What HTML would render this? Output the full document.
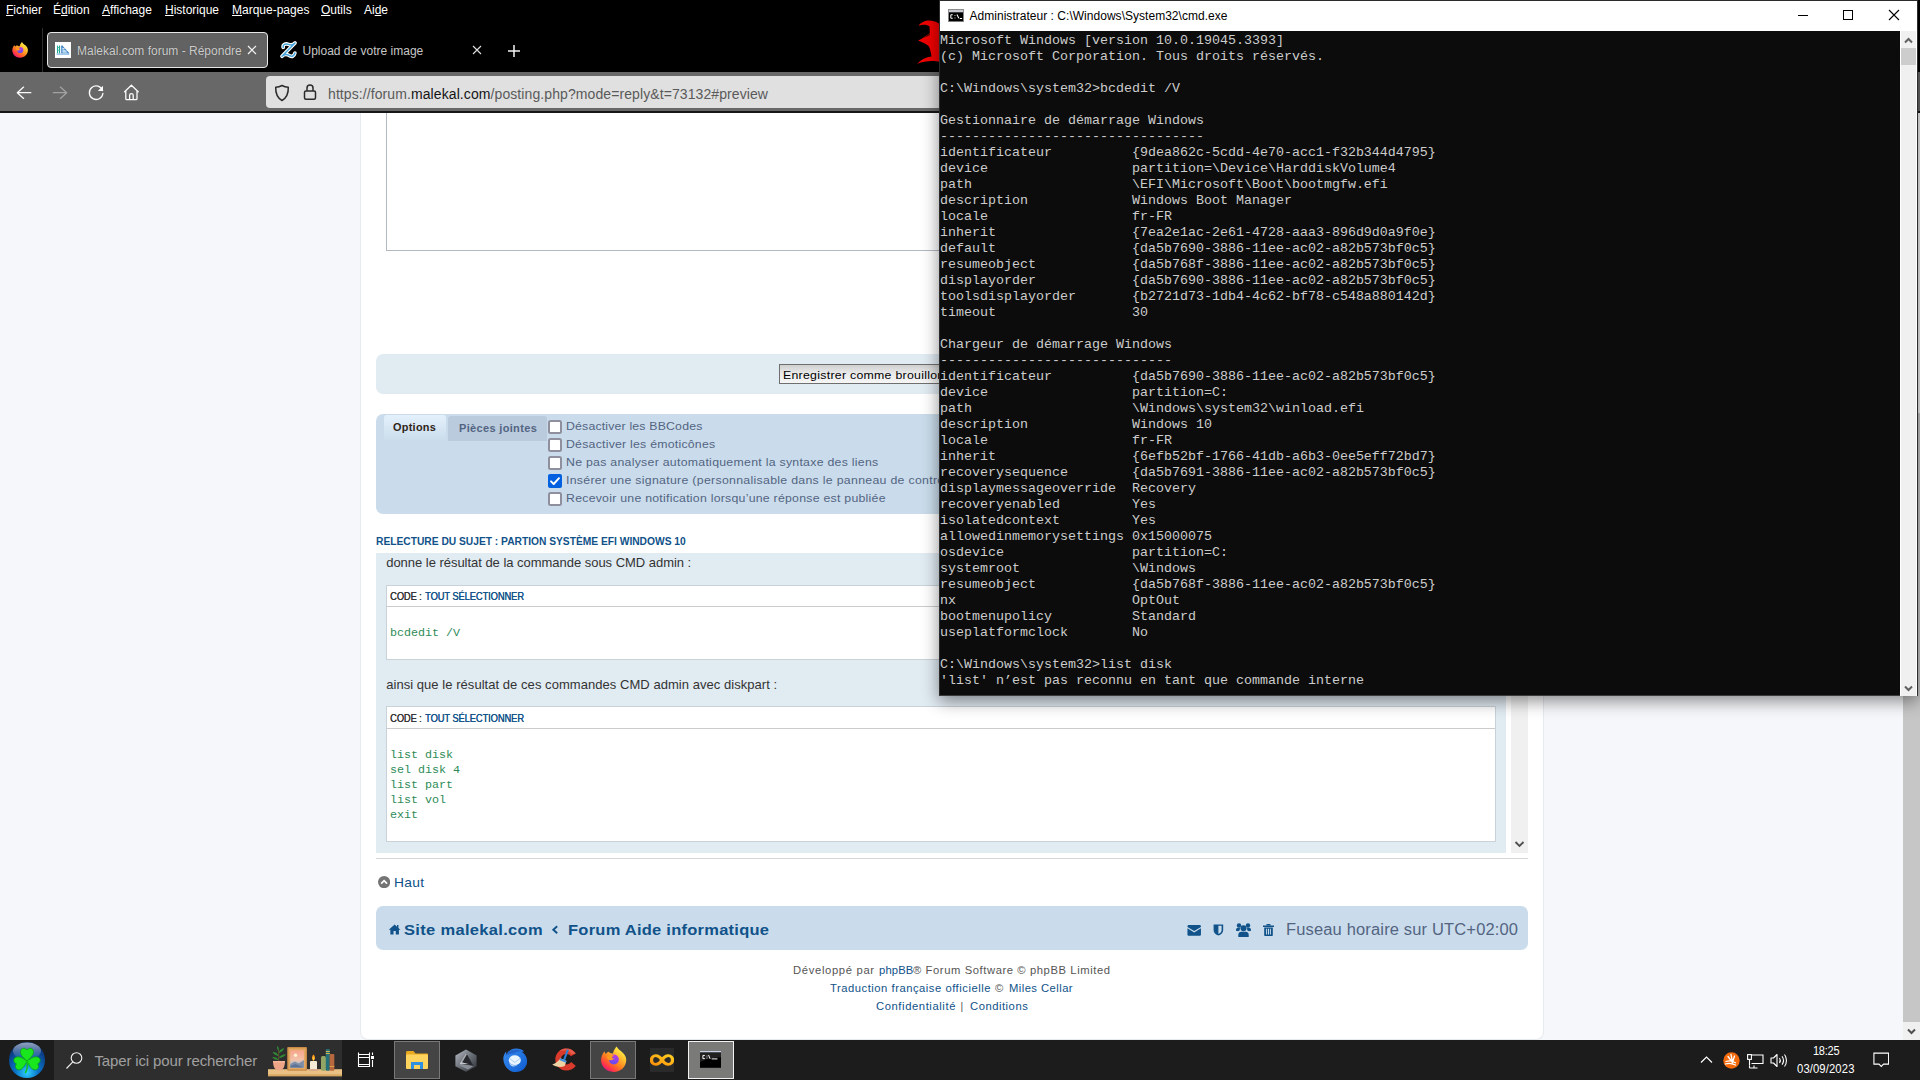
<!DOCTYPE html>
<html><head><meta charset="utf-8"><title>screenshot</title>
<style>
*{box-sizing:border-box;margin:0;padding:0}
html,body{width:1920px;height:1080px;overflow:hidden;background:#f5f7fa;font-family:"Liberation Sans",sans-serif}
.abs{position:absolute}
#root{position:relative;width:1920px;height:1080px;overflow:hidden}
/* firefox chrome */
#menubar{left:0;top:0;width:1920px;height:20px;background:#000;color:#fff;font-size:12px}
#menubar span{position:absolute;top:3px;white-space:nowrap}
#menubar u{text-decoration:underline;text-underline-offset:1px}
#tabbar{left:0;top:20px;width:1920px;height:52px;background:#000}
#navbar{left:0;top:72px;width:1920px;height:41px;background:#686868;border-bottom:2.500px solid #161616}
#urlbar{left:266px;top:75.600px;width:1400px;height:32.200px;background:#e0e0e0;border-radius:4px}
.tabtxt{color:#cdcdcd;font-size:12px;white-space:nowrap}
/* page */
#col{left:360px;top:113px;width:1184px;height:927px;background:#fff;border:1px solid #e6e9ed;border-top:0;border-radius:0 0 8px 8px}
.vd{font-family:"Liberation Sans",sans-serif;white-space:nowrap}
.panel1{background:#e1ebf2;border-radius:7px}
.panel2{background:#cadceb;border-radius:7px}
.cb{width:14px;height:14px;border:2px solid #8f8f9d;border-radius:2.500px;background:#fff}
.lbl{color:#536482;font-size:13.4px;white-space:nowrap;letter-spacing:.35px}
.codebox{background:#fff;border:1px solid #c9d2d8}
.codehd{left:0;top:0;right:0;height:21px;border-bottom:1px solid #ccc;font-size:9.900px;line-height:12px;color:#333;white-space:nowrap}
.code{font-family:"Liberation Mono",monospace;color:#2e8b57;font-size:11.7px;white-space:pre;line-height:15px}
.ptxt{color:#333;font-size:13px;white-space:nowrap}
/* cmd */
#cmd{left:939px;top:0;width:979px;height:696px;background:#0c0c0c;border:1px solid #2b2b2b;border-bottom:1px solid #3a3a3a;box-shadow:0 5px 16px rgba(0,0,0,.45)}
#cmdtitle{left:0;top:0;width:977px;height:30px;background:#fff}
#cmdtext{left:0px;top:32px;font-family:"Liberation Mono",monospace;font-size:13.6px;line-height:16px;color:#ccc;white-space:pre;transform:scaleX(0.98039);transform-origin:0 0}
/* taskbar */
#taskbar{left:0;top:1040px;width:1920px;height:40px;background:#1c1c1c}
</style></head><body><div id="root">

<!-- PAGE BACKGROUND + COLUMN -->
<div class="abs" id="col"></div>
<div class="abs" id="page" style="left:0;top:0;width:1920px;height:1080px">
<!-- textarea -->
<div class="abs" style="left:386px;top:100px;width:1122px;height:151px;border:1px solid #b3b9c0;background:#fff"></div>
<!-- submit panel -->
<div class="abs panel1" style="left:376px;top:354px;width:1152px;height:40px"></div>
<div class="abs" style="left:779px;top:364px;width:200px;height:20px;background:linear-gradient(#cfcfcf,#e9e9e9 45%,#f6f6f6);border:1px solid #6f6f6f;color:#000;font-size:11.500px;line-height:13px;padding:3.800px 0 0 3.300px"><span style="display:inline-block;font-size:11.5px;letter-spacing:0.264px;white-space:pre;transform-origin:0 50%;transform:scaleX(1.07);">Enregistrer comme brouillon</span></div>
<!-- options panel -->
<div class="abs panel2" style="left:376px;top:414px;width:1152px;height:99.500px"></div>
<div class="abs" style="left:384px;top:415px;width:62px;height:26px;border-radius:3px 3px 0 0;background:linear-gradient(#e4f1fc,#cadceb);color:#2e2418;font-size:10.400px;line-height:12px;padding:6.700px 0 0 9.4px"><span style="display:inline-block;font-size:10.4px;letter-spacing:0.257px;white-space:pre;transform-origin:0 50%;transform:scaleX(1.05);font-weight:bold;">Options</span></div>
<div class="abs" style="left:448px;top:416px;width:99px;height:25px;border-radius:3px 3px 0 0;background:#b9cbdc;color:#536482;font-size:10.400px;line-height:12px;padding:7.100px 0 0 10.7px"><span style="display:inline-block;font-size:10.4px;letter-spacing:0.312px;white-space:pre;transform-origin:0 50%;transform:scaleX(1.06);font-weight:bold;">Pièces jointes</span></div>
<div class="abs cb" style="left:548px;top:420px"></div>
<div class="abs cb" style="left:548px;top:438px"></div>
<div class="abs cb" style="left:548px;top:456px"></div>
<div class="abs" style="left:548px;top:474px;width:14px;height:14px;border-radius:2px;background:#0060df"><svg width="14" height="14" viewBox="0 0 14 14" style="display:block"><path d="M3 7.300l2.700 2.700L11 4.200" stroke="#fff" stroke-width="1.900" fill="none" stroke-linecap="round" stroke-linejoin="round"/></svg></div>
<div class="abs cb" style="left:548px;top:492px"></div>
<div class="abs lbl" style="left:566.2px;top:418px"><span style="display:inline-block;font-size:11.5px;letter-spacing:0.162px;white-space:pre;transform-origin:0 50%;transform:scaleX(1.07);">Désactiver les BBCodes</span></div>
<div class="abs lbl" style="left:566.2px;top:436px"><span style="display:inline-block;font-size:11.5px;letter-spacing:0.216px;white-space:pre;transform-origin:0 50%;transform:scaleX(1.07);">Désactiver les émoticônes</span></div>
<div class="abs lbl" style="left:566.2px;top:454px"><span style="display:inline-block;font-size:11.5px;letter-spacing:0.257px;white-space:pre;transform-origin:0 50%;transform:scaleX(1.07);">Ne pas analyser automatiquement la syntaxe des liens</span></div>
<div class="abs lbl" style="left:566.2px;top:472px"><span style="display:inline-block;font-size:11.5px;letter-spacing:0.282px;white-space:pre;transform-origin:0 50%;transform:scaleX(1.07);">Insérer une signature (personnalisable dans le panneau de contrôle)</span></div>
<div class="abs lbl" style="left:566.2px;top:490px"><span style="display:inline-block;font-size:11.5px;letter-spacing:0.233px;white-space:pre;transform-origin:0 50%;transform:scaleX(1.07);">Recevoir une notification lorsqu’une réponse est publiée</span></div>
<!-- heading -->
<div class="abs" style="left:376.2px;top:531px;color:#105289"><span style="display:inline-block;font-size:11.4px;letter-spacing:-0.012px;white-space:pre;transform-origin:0 50%;transform:scaleX(0.9);font-weight:bold;">RELECTURE DU SUJET : PARTION SYSTÈME EFI WINDOWS 10</span></div>
<!-- post review -->
<div class="abs" style="left:376px;top:553px;width:1130px;height:300px;background:#e1ebf2"></div>
<div class="abs ptxt" style="left:386.2px;top:555px"><span style="display:inline-block;font-size:13.0px;letter-spacing:-0.028px;white-space:pre;transform-origin:0 50%;">donne le résultat de la commande sous CMD admin :</span></div>
<div class="abs codebox" style="left:386px;top:585px;width:1110px;height:75px"><div class="abs codehd" style="padding:5px 0 0 3px"><span style="text-shadow:.35px 0 0 currentColor"><span style="display:inline-block;font-size:10.4px;letter-spacing:-0.132px;white-space:pre;transform-origin:0 50%;transform:scaleX(0.9);">CODE :</span></span><span class="abs" style="color:#105289;left:38.200px;text-shadow:.35px 0 0 currentColor"><span style="display:inline-block;font-size:10.4px;letter-spacing:-0.107px;white-space:pre;transform-origin:0 50%;transform:scaleX(0.9);">TOUT SÉLECTIONNER</span></span></div><div class="abs code" style="left:3px;top:40px">bcdedit /V</div></div>
<div class="abs ptxt" style="left:386.2px;top:677px"><span style="display:inline-block;font-size:13.0px;letter-spacing:0.047px;white-space:pre;transform-origin:0 50%;">ainsi que le résultat de ces commandes CMD admin avec diskpart :</span></div>
<div class="abs codebox" style="left:386px;top:706px;width:1110px;height:136px"><div class="abs codehd" style="height:22px;padding:6px 0 0 3px"><span style="text-shadow:.35px 0 0 currentColor"><span style="display:inline-block;font-size:10.4px;letter-spacing:-0.132px;white-space:pre;transform-origin:0 50%;transform:scaleX(0.9);">CODE :</span></span><span class="abs" style="color:#105289;left:38.200px;text-shadow:.35px 0 0 currentColor"><span style="display:inline-block;font-size:10.4px;letter-spacing:-0.107px;white-space:pre;transform-origin:0 50%;transform:scaleX(0.9);">TOUT SÉLECTIONNER</span></span></div><div class="abs code" style="left:3px;top:41px">list disk
sel disk 4
list part
list vol
exit</div></div>
<!-- inner scrollbar -->
<div class="abs" style="left:1511px;top:553px;width:17px;height:300px;background:#f0f0f0"></div>
<svg class="abs" style="left:1514px;top:840px" width="11" height="8" viewBox="0 0 11 8"><path d="M1.500 2l4 4 4-4" stroke="#505050" stroke-width="1.800" fill="none"/></svg>
<div class="abs" style="left:376px;top:858px;width:1152px;height:1px;background:#d6d6d6"></div>
<!-- Haut -->
<svg class="abs" style="left:378px;top:876px" width="12.200" height="12.200" viewBox="0 0 14 14"><circle cx="7" cy="7" r="7" fill="#747474"/><path d="M3.600 8.700L7 5.300l3.400 3.400" stroke="#fff" stroke-width="2" fill="none"/></svg>
<div class="abs" style="left:393.8px;top:872.800px;color:#105289"><span style="display:inline-block;font-size:13.0px;letter-spacing:0.281px;white-space:pre;transform-origin:0 50%;transform:scaleX(1.06);">Haut</span></div>
<!-- footer nav -->
<div class="abs panel2" style="left:376px;top:906px;width:1152px;height:44px"></div>
<svg class="abs" style="left:388px;top:923.200px" width="13.300" height="12.400" viewBox="0 0 14 13"><path d="M7 1.500L0.800 7h1.700v5h3.300V8.500h2.400V12h3.300V7h1.700L11 5.200V2H9.500v1.800z" fill="#105289"/></svg>
<div class="abs" style="left:404.4px;top:921.200px;color:#105289"><span style="display:inline-block;font-size:15.0px;letter-spacing:0.290px;white-space:pre;transform-origin:0 50%;transform:scaleX(1.1);font-weight:bold;">Site malekal.com</span></div>
<svg class="abs" style="left:550px;top:924px" width="10" height="12" viewBox="550 924 10 12"><path d="M557.200 926.300L553.300 929.800L557.200 933.300" stroke="#105289" stroke-width="1.900" fill="none"/></svg>
<div class="abs" style="left:567.8px;top:921.200px;color:#105289"><span style="display:inline-block;font-size:15.0px;letter-spacing:0.226px;white-space:pre;transform-origin:0 50%;transform:scaleX(1.1);font-weight:bold;">Forum Aide informatique</span></div>
<svg class="abs" style="left:1186.500px;top:925px" width="14.400" height="10.800" viewBox="0 0 15 12"><path d="M0 1.500C0 0.700 0.700 0 1.500 0h12c0.800 0 1.500 0.700 1.500 1.500v0.600L7.500 6.800 0 2.100zM0 3.600l7.500 4.700L15 3.600v6.900c0 0.800-0.700 1.500-1.500 1.500h-12C0.700 12 0 11.300 0 10.500z" fill="#105289"/></svg>
<svg class="abs" style="left:1213.100px;top:924px" width="10.800" height="12" viewBox="0 0 13 15"><path d="M0.500 0.500h12v7c0 3.600-2.600 6-6 7-3.400-1-6-3.400-6-7z" fill="#105289"/><path d="M6.500 2.300v10.200c2.400-0.900 4-2.600 4-5V2.300z" fill="#cadceb"/></svg>
<svg class="abs" style="left:1236.200px;top:922.800px" width="15" height="14.100" viewBox="0 0 15 14"><circle cx="3" cy="2.400" r="2.200" fill="#105289"/><circle cx="12" cy="2.400" r="2.200" fill="#105289"/><path d="M0 7.800V6.600c0-1.300 1-2 2-2h2.200c-0.500 0.800-0.600 1.700-0.300 2.600-0.800 0.300-1.300 0.500-1.700 0.900zM15 7.800V6.600c0-1.300-1-2-2-2h-2.200c0.500 0.800 0.600 1.700 0.300 2.600 0.800 0.300 1.300 0.500 1.700 0.900z" fill="#105289"/><circle cx="7.500" cy="5.300" r="3" fill="#105289"/><path d="M2.300 14v-2.200c0-2 1.400-3 2.800-3h4.800c1.400 0 2.800 1 2.800 3V14z" fill="#105289"/></svg>
<svg class="abs" style="left:1263.100px;top:923.800px" width="11" height="12.300" viewBox="0 0 11 12.300"><path d="M3.800 0h3.400l0.600 1.300H3.200zM0 1.600h11v1.400H0zM1.200 3.600h8.600v7.500c0 0.700-0.500 1.200-1.200 1.200H2.400c-0.700 0-1.200-0.500-1.200-1.200zM3.100 4.800v5.800h1V4.800zM5 4.800v5.800h1V4.800zM6.900 4.800v5.800h1V4.800z" fill="#105289" fill-rule="evenodd"/></svg>
<div class="abs" style="left:1285.6px;top:921.300px;color:#536482"><span style="display:inline-block;font-size:16.0px;letter-spacing:0.158px;white-space:pre;transform-origin:0 50%;transform:scaleX(1.03);">Fuseau horaire sur UTC+02:00</span></div>
<!-- copyright -->
<div class="abs" style="left:793px;top:959.700px;color:#555"><span style="display:inline-block;font-size:10.4px;letter-spacing:0.621px;white-space:pre;transform-origin:0 50%;transform:scaleX(1.08);">Développé par </span></div>
<div class="abs" style="left:878.5px;top:959.700px;color:#105289"><span style="display:inline-block;font-size:10.4px;letter-spacing:0.149px;white-space:pre;transform-origin:0 50%;transform:scaleX(1.08);">phpBB</span></div>
<div class="abs" style="left:913px;top:959.700px;color:#555"><span style="display:inline-block;font-size:10.4px;letter-spacing:0.547px;white-space:pre;transform-origin:0 50%;transform:scaleX(1.08);">® Forum Software © phpBB Limited</span></div>
<div class="abs" style="left:830px;top:977.700px;color:#105289"><span style="display:inline-block;font-size:10.4px;letter-spacing:0.487px;white-space:pre;transform-origin:0 50%;transform:scaleX(1.08);">Traduction française officielle</span></div>
<div class="abs" style="left:995px;top:977.700px;color:#555"><span style="display:inline-block;font-size:10.4px;letter-spacing:0.677px;white-space:pre;transform-origin:0 50%;transform:scaleX(1.08);">©</span></div>
<div class="abs" style="left:1009px;top:977.700px;color:#105289"><span style="display:inline-block;font-size:10.4px;letter-spacing:0.416px;white-space:pre;transform-origin:0 50%;transform:scaleX(1.08);">Miles Cellar</span></div>
<div class="abs" style="left:875.6px;top:995.700px;color:#105289"><span style="display:inline-block;font-size:10.4px;letter-spacing:0.548px;white-space:pre;transform-origin:0 50%;transform:scaleX(1.08);">Confidentialité</span></div>
<div class="abs" style="left:960.5px;top:995.700px;color:#555"><span style="font-size:10.4px">&#124;</span></div>
<div class="abs" style="left:969.5px;top:995.700px;color:#105289"><span style="display:inline-block;font-size:10.4px;letter-spacing:0.488px;white-space:pre;transform-origin:0 50%;transform:scaleX(1.08);">Conditions</span></div>
</div>

<!-- FIREFOX CHROME -->
<div class="abs" id="menubar"><span style="left:6px"><u>F</u>ichier</span><span style="left:53px">É<u>d</u>ition</span><span style="left:102px"><u>A</u>ffichage</span><span style="left:165px"><u>H</u>istorique</span><span style="left:232px"><u>M</u>arque-pages</span><span style="left:321px"><u>O</u>utils</span><span style="left:364px">Ai<u>d</u>e</span></div>
<div class="abs" id="tabbar"></div>
<div class="abs" id="navbar"></div>
<div class="abs" id="urlbar"></div>
<div class="abs" id="chrome" style="left:0;top:0;width:1920px;height:113px">
<!-- firefox logo -->
<svg class="abs" style="left:11px;top:41px" width="18" height="18" viewBox="11 41 18 18"><defs><linearGradient id="ffg" x1=".85" y1=".1" x2=".2" y2=".95"><stop offset="0" stop-color="#fff44f"/><stop offset=".3" stop-color="#ffbd2e"/><stop offset=".6" stop-color="#ff7a1f"/><stop offset=".85" stop-color="#ff3647"/><stop offset="1" stop-color="#e31587"/></linearGradient><linearGradient id="ffp" x1=".6" y1="0" x2=".4" y2="1"><stop offset="0" stop-color="#c03be0"/><stop offset="1" stop-color="#5b4cf5"/></linearGradient></defs><path d="M21.900 42C22.800 43.600 24.200 44.400 25.600 45.600C27.400 47.200 28 49 27.900 50.600C27.700 54.600 24.400 57.700 20.100 57.700C15.800 57.700 12.300 54.600 12.300 50.500C12.300 48.400 13.100 46.400 14.400 44.900C14.500 45.600 14.800 46.200 15.200 46.600C15.700 45.800 16.400 45.300 17.100 45.200C17.600 46 18.600 46.400 19.700 46.200C19.900 44.600 20.900 43.200 21.900 42Z" fill="url(#ffg)"/><circle cx="20.200" cy="50" r="3.100" fill="url(#ffp)"/><path d="M16 48.200C17.300 47 19 46.900 20.600 47.500C19.500 47.900 18.900 48.500 19 49.200C19.600 49.200 20.300 49.300 20.700 49.600C19.600 50.400 18.100 50.700 17.200 50.300C16.300 49.900 15.800 49.100 16 48.200Z" fill="#ff9a1f"/></svg>
<div class="abs" style="left:42px;top:28px;width:1px;height:44px;background:#2e2e2e"></div>
<!-- active tab -->
<div class="abs" style="left:47px;top:32px;width:221px;height:36px;background:#626262;border:1px solid #e8e8e8;border-radius:4px"></div>
<div class="abs" style="left:55px;top:42px;width:16px;height:16px;background:#fff"></div>
<svg class="abs" style="left:55px;top:42px" width="16" height="16" viewBox="55 42 16 16"><rect x="57" y="45.600" width="1.100" height="7.800" fill="#1aa890"/><rect x="59" y="45.600" width="1.100" height="7.800" fill="#1aa890"/><rect x="57" y="47.200" width="3.100" height=".8" fill="#35b3a0"/><rect x="57" y="49.800" width="3.100" height=".8" fill="#35b3a0"/><path d="M61.800 45.800L68.800 53.400H61.800Z" fill="#9cc6ea"/><path d="M61.800 45.800L68.800 53.400" stroke="#3b7fc4" stroke-width="1.200"/><rect x="61.300" y="45.600" width="1.100" height="7.800" fill="#2f78c0"/><path d="M62.400 48.500h2.200M62.400 51h4.400" stroke="#fff" stroke-width=".7"/><rect x="56.500" y="53.500" width="12.800" height="1.200" fill="#7fb4e2"/></svg>
<div class="abs tabtxt" style="left:77px;top:44px;text-shadow:0 0 1px rgba(0,0,0,.4)">Malekal.com forum - Répondre</div>
<svg class="abs" style="left:247px;top:44.500px" width="10" height="10" viewBox="0 0 10 10"><path d="M1 1l8 8M9 1L1 9" stroke="#f4f4f4" stroke-width="1.200"/></svg>
<!-- second tab -->
<svg class="abs" style="left:278px;top:39px" width="22" height="22" viewBox="278 39 22 22"><path d="M283.200 47.300C282.600 44.600 285.500 43.200 288.500 44.400C291 45.400 293.500 44.700 295 43L282 56.200C284.500 53.600 287.500 54.400 289.600 55.700C291.800 57 294.300 56 294.900 53" stroke="#fff" stroke-width="3.700" fill="none" stroke-linecap="round" stroke-linejoin="round"/><path d="M283.200 47.300C282.600 44.600 285.500 43.200 288.500 44.400C291 45.400 293.500 44.700 295 43L282 56.200C284.500 53.600 287.500 54.400 289.600 55.700C291.800 57 294.300 56 294.900 53" stroke="#49a6dc" stroke-width="1.500" fill="none" stroke-linecap="round" stroke-linejoin="round"/></svg>
<div class="abs tabtxt" style="left:302.500px;top:44px;color:#c6c6c6">Upload de votre image</div>
<svg class="abs" style="left:472px;top:44.500px" width="10" height="10" viewBox="0 0 10 10"><path d="M1 1l8 8M9 1L1 9" stroke="#e0e0e0" stroke-width="1.100"/></svg>
<svg class="abs" style="left:507px;top:44px" width="14" height="14" viewBox="0 0 14 14"><path d="M7 1v12M1 7h12" stroke="#f4f4f4" stroke-width="1.5"/></svg>
<!-- red deco -->
<svg class="abs" style="left:910px;top:15px" width="30" height="55" viewBox="910 15 30 55"><path d="M918.500 25.800C921 22.300 926 20.200 930 20.600C934 21 938 22.500 940 24.500L940 62C934 60.500 925 60.500 917 64C921 59.500 926 57 931.500 56.500C931 52 930 49 929 46.500C926 44 922 42 918.100 40.600L929.800 35L929.600 26.500C927 24.300 922.500 24 918.500 25.800Z" fill="#f00000"/><path d="M921.800 38.900L939.600 27" stroke="#f00000" stroke-width=".6"/></svg>
<!-- nav icons -->
<svg class="abs" style="left:8px;top:76px" width="140" height="34" viewBox="8 76 140 34"><g fill="none" stroke-linecap="round" stroke-linejoin="round" stroke-width="1.300"><path d="M23.600 87.100L17.300 92.700L23.600 98.400M17.500 92.700H30.800" stroke="#fbfbfb"/><path d="M60.400 87.100L66.700 92.700L60.400 98.400M66.500 92.700H53.300" stroke="#a2a2a2"/><path d="M102.600 90.500A6.800 6.800 0 1 0 102.900 93.500" stroke="#fbfbfb"/><path d="M131.400 85.300L124.600 91.700M131.400 85.300L138.200 91.700M125.800 91.300V98.700Q125.800 99.600 126.700 99.600H136.100Q137 99.600 137 98.700V91.300M129.600 99.400V95.200Q129.600 93.600 131.400 93.600Q133.200 93.600 133.200 95.200V99.400" stroke="#fbfbfb"/></g><path d="M103 85.700V91.100H97.800Z" fill="#fbfbfb"/></svg>
<!-- url icons -->
<svg class="abs" style="left:274px;top:83.500px" width="16" height="18" viewBox="0 0 16 18"><path d="M8 1.500c2 1.200 4 1.700 6.300 1.800 0.200 6-1.800 10.700-6.300 13.200C3.500 14 1.500 9.300 1.700 3.300 4 3.200 6 2.700 8 1.500z" stroke="#2b2b2b" stroke-width="1.500" fill="none" stroke-linejoin="round"/></svg>
<svg class="abs" style="left:303px;top:83px" width="14" height="18" viewBox="0 0 14 18"><rect x="1.500" y="8" width="11" height="8.300" rx="1.500" stroke="#2b2b2b" stroke-width="1.500" fill="none"/><path d="M4 8V5a3 3 0 0 1 6 0V8" stroke="#2b2b2b" stroke-width="1.500" fill="none"/></svg>
<div class="abs" style="left:328px;top:85.500px;font-size:14px;letter-spacing:.09px;color:#5a5a5a;white-space:nowrap">https://forum.<span style="color:#151515">malekal.com</span>/posting.php?mode=reply&amp;t=73132#preview</div>
</div>

<!-- page scrollbar -->
<div class="abs" id="pgscroll" style="left:1903px;top:113px;width:17px;height:927px;background:#f0f0f0"><div class="abs" style="left:0;top:300px;width:17px;height:609px;background:#c6c6c6"></div><svg class="abs" style="left:4px;top:914.500px" width="9" height="7" viewBox="0 0 9 7"><path d="M1 1.500l3.500 3.500 3.500-3.500" stroke="#505050" stroke-width="2" fill="none"/></svg></div>

<!-- CMD WINDOW -->
<div class="abs" id="cmd">
<div class="abs" id="cmdtitle"></div>
<svg class="abs" style="left:8px;top:8px" width="16" height="13.200" viewBox="0 0 17 14"><rect x="0.500" y="0.500" width="16" height="13" fill="#000" stroke="#8a8a8a"/><rect x="1" y="1" width="15" height="2.500" fill="#c8ccd2"/><path d="M3 6.200h2M3 6.200v3.600M3 9.800h2M7 7h0.800M7 9.500h0.800M9.500 5.800l2 4M12.500 10.200h2.500" stroke="#fff" stroke-width="1.100" fill="none"/></svg>
<div class="abs" style="left:29.500px;top:5px;color:#000"><span style="display:inline-block;font-size:12.0px;letter-spacing:0.028px;white-space:pre;transform-origin:0 50%;">Administrateur : C:\Windows\System32\cmd.exe</span></div>
<svg class="abs" style="left:857px;top:8px" width="12" height="12" viewBox="0 0 12 12"><path d="M1 6.500h10" stroke="#000" stroke-width="1"/></svg>
<svg class="abs" style="left:902px;top:8px" width="12" height="12" viewBox="0 0 12 12"><rect x="1.500" y="1.500" width="9" height="9" stroke="#000" stroke-width="1" fill="none"/></svg>
<svg class="abs" style="left:948px;top:8px" width="12" height="12" viewBox="0 0 12 12"><path d="M1 1l10 10M11 1L1 11" stroke="#000" stroke-width="1.100"/></svg>
<div class="abs" id="cmdtext">Microsoft Windows [version 10.0.19045.3393]
(c) Microsoft Corporation. Tous droits réservés.

C:\Windows\system32&gt;bcdedit /V

Gestionnaire de démarrage Windows
---------------------------------
identificateur          {9dea862c-5cdd-4e70-acc1-f32b344d4795}
device                  partition=\Device\HarddiskVolume4
path                    \EFI\Microsoft\Boot\bootmgfw.efi
description             Windows Boot Manager
locale                  fr-FR
inherit                 {7ea2e1ac-2e61-4728-aaa3-896d9d0a9f0e}
default                 {da5b7690-3886-11ee-ac02-a82b573bf0c5}
resumeobject            {da5b768f-3886-11ee-ac02-a82b573bf0c5}
displayorder            {da5b7690-3886-11ee-ac02-a82b573bf0c5}
toolsdisplayorder       {b2721d73-1db4-4c62-bf78-c548a880142d}
timeout                 30

Chargeur de démarrage Windows
-----------------------------
identificateur          {da5b7690-3886-11ee-ac02-a82b573bf0c5}
device                  partition=C:
path                    \Windows\system32\winload.efi
description             Windows 10
locale                  fr-FR
inherit                 {6efb52bf-1766-41db-a6b3-0ee5eff72bd7}
recoverysequence        {da5b7691-3886-11ee-ac02-a82b573bf0c5}
displaymessageoverride  Recovery
recoveryenabled         Yes
isolatedcontext         Yes
allowedinmemorysettings 0x15000075
osdevice                partition=C:
systemroot              \Windows
resumeobject            {da5b768f-3886-11ee-ac02-a82b573bf0c5}
nx                      OptOut
bootmenupolicy          Standard
useplatformclock        No

C:\Windows\system32&gt;list disk
'list' n’est pas reconnu en tant que commande interne</div>
<div class="abs" style="left:960px;top:30px;width:17px;height:665px;background:#fff"></div>
<div class="abs" style="left:961px;top:30px;width:15px;height:665px;background:#f0f0f0"></div>
<div class="abs" style="left:961px;top:47px;width:15px;height:17px;background:#cdcdcd"></div>
<svg class="abs" style="left:963.500px;top:35.500px" width="9" height="7" viewBox="0 0 9 7"><path d="M1 5.500l3.500-3.500 3.500 3.500" stroke="#606060" stroke-width="2" fill="none"/></svg>
<svg class="abs" style="left:963.500px;top:684px" width="9" height="7" viewBox="0 0 9 7"><path d="M1 1.500l3.500 3.500 3.500-3.500" stroke="#606060" stroke-width="2" fill="none"/></svg>
</div>

<!-- TASKBAR -->
<div class="abs" id="taskbar">
<!-- start orb -->
<svg class="abs" style="left:8px;top:1px" width="38" height="38" viewBox="0 0 38 38"><defs><radialGradient id="orb" cx="0.5" cy="0.85" r="0.9"><stop offset="0" stop-color="#2fd0ff"/><stop offset="0.35" stop-color="#0a74c8"/><stop offset="0.75" stop-color="#0a3d86"/><stop offset="1" stop-color="#0b2a5e"/></radialGradient><linearGradient id="orbhi" x1="0" y1="0" x2="0" y2="1"><stop offset="0" stop-color="#fff" stop-opacity=".55"/><stop offset="1" stop-color="#fff" stop-opacity="0"/></linearGradient></defs><circle cx="19" cy="19" r="18" fill="url(#orb)"/><ellipse cx="19" cy="10" rx="14" ry="8.500" fill="url(#orbhi)"/><g fill="#19e61c" stroke="#0b9c12" stroke-width=".7"><path d="M19 20C14.500 16.500 11.800 13 12.600 9.800C13.300 7 16.800 6.300 19 9C21.200 6.300 24.700 7 25.400 9.800C26.200 13 23.500 16.500 19 20Z"/><g transform="rotate(-105 19 20)"><path d="M19 20C14.500 16.500 11.800 13 12.600 9.800C13.300 7 16.800 6.300 19 9C21.200 6.300 24.700 7 25.400 9.800C26.200 13 23.500 16.500 19 20Z"/></g><g transform="rotate(105 19 20)"><path d="M19 20C14.500 16.500 11.800 13 12.600 9.800C13.300 7 16.800 6.300 19 9C21.200 6.300 24.700 7 25.400 9.800C26.200 13 23.500 16.500 19 20Z"/></g></g><path d="M19 20C19.800 24 19.300 28 17.600 31.500" stroke="#12c417" stroke-width="1.600" fill="none" stroke-linecap="round"/></svg>
<!-- search -->
<div class="abs" style="left:54px;top:0;width:288px;height:40px;background:#2e2e2e"></div>
<svg class="abs" style="left:65px;top:11px" width="19" height="19" viewBox="0 0 19 19"><circle cx="11.500" cy="7" r="5.300" stroke="#f0f0f0" stroke-width="1.100" fill="none"/><path d="M7.800 10.800L1.500 17.500" stroke="#f0f0f0" stroke-width="1.100"/></svg>
<div class="abs" style="left:94.400px;top:12px;color:#a0a0a0"><span style="display:inline-block;font-size:15.0px;letter-spacing:-0.132px;white-space:pre;transform-origin:0 50%;">Taper ici pour rechercher</span></div>
<!-- shelf picture -->
<svg class="abs" style="left:267px;top:4px" width="76" height="34" viewBox="267 1044 76 34"><defs><linearGradient id="sky" x1="0" y1="0" x2="0" y2="1"><stop offset="0" stop-color="#f7a58f"/><stop offset=".55" stop-color="#f3c0a8"/><stop offset="1" stop-color="#7fc4e8"/></linearGradient></defs>
<rect x="268" y="1069.200" width="74" height="7" fill="#e9c184"/><rect x="268" y="1074.300" width="74" height="1.900" fill="#d8a863"/>
<path d="M273 1061h12c0 5-1.500 9.500-6 9.500s-6-4.500-6-9.500z" fill="#eea587"/><path d="M273 1061h12v1.300h-12z" fill="#f5b89c"/>
<path d="M278.700 1061v-11" stroke="#6b4a2a" stroke-width="1"/>
<path d="M278.700 1056c-3-0.500-5.500-2-6-4 3 0 5 1.500 6 4zM278.700 1053c2.500-0.800 5-2.500 5.500-5-3 0.500-5 2.500-5.500 5zM278.700 1060c-3 0-5.500-1-6.500-3 3-0.300 5.200 1 6.500 3zM278.700 1058c3-0.300 6-1.500 7.300-3.800-3.300 0-6 1.300-7.300 3.800zM278.700 1051c-1.500-1.300-2-3-1.500-5 1.500 1.200 2 3 1.500 5z" fill="#2f8a35"/>
<rect x="287.200" y="1047" width="19.800" height="23.700" rx="1" fill="#c98a48"/><rect x="288.500" y="1048.300" width="17.200" height="21.100" fill="#e3a862"/><rect x="290.300" y="1050.300" width="13.600" height="17.200" fill="url(#sky)"/>
<path d="M290.300 1064l4.500-2.500 4 2 5.100-3.500v7.500h-13.600z" fill="#7f8ea8"/><path d="M290.300 1066l5-2 8.600 3.500h-13.600z" fill="#5f7396"/><circle cx="295.500" cy="1055.300" r="1.700" fill="#fff3d0"/>
<rect x="310" y="1061" width="7" height="8.800" rx="1" fill="#f6ecd6"/><ellipse cx="313.500" cy="1070" rx="5" ry="1" fill="#d9a98a"/><path d="M313.500 1054.500c1.800 2 2.300 4 0 6.500-2.300-2.500-1.800-4.500 0-6.500z" fill="#ff9a1e"/><path d="M313.500 1057c0.800 1 1 2.200 0 3.500-1-1.300-0.800-2.500 0-3.500z" fill="#ffd84a"/>
<rect x="321" y="1056" width="5" height="14.700" rx="1.500" fill="#93a565"/><rect x="325.800" y="1049" width="4" height="21.700" rx="1" fill="#256f78"/><rect x="325.800" y="1051" width="4" height="1" fill="#d9b44a"/><rect x="325.800" y="1053" width="4" height="1" fill="#d9b44a"/><rect x="329.600" y="1054" width="4.700" height="16.700" rx="1" fill="#b8683e"/><rect x="329.600" y="1066" width="4.700" height="1" fill="#d9a24a"/>
</svg>
<!-- task view -->
<svg class="abs" style="left:356px;top:10px" width="20" height="20" viewBox="356 1050 20 20"><path d="M358.500 1052.500v4.500M369.500 1052.500v4.500M358.500 1054.500h11M358.500 1057.500h11v7h-11zM358.500 1064.500v2.500M369.500 1064.500v2.500M358.500 1066.500h11M372.500 1052.500v14.500" stroke="#fff" stroke-width="1.100" fill="none"/><rect x="371" y="1056" width="3" height="3" fill="#fff"/><path d="M370.500 1055.500h4M370.500 1059.500h4" stroke="#1c1c1c" stroke-width="1"/></svg>
<!-- explorer tile -->
<div class="abs" style="left:394px;top:1px;width:46px;height:38px;background:#444;border:1px solid #787878"></div>
<svg class="abs" style="left:405px;top:9px" width="24" height="22" viewBox="0 0 24 22"><path d="M1 3.500C1 2.700 1.700 2 2.500 2h6l2 2.500H22c.6 0 1 .4 1 1V7H1z" fill="#e8a920"/><rect x="1" y="5.500" width="22" height="14.500" rx="1" fill="#ffd45e"/><path d="M6 13h12v7H6z" fill="#2f8fe0"/><path d="M9 16h6v4H9z" fill="#ffd45e"/></svg>
<!-- hex icon -->
<svg class="abs" style="left:453px;top:7px" width="26" height="26" viewBox="453 1047 26 26"><defs><linearGradient id="hx" x1="0" y1="0" x2="1" y2="1"><stop offset="0" stop-color="#b9bec6"/><stop offset=".5" stop-color="#6a6f77"/><stop offset="1" stop-color="#2c2e33"/></linearGradient></defs><path d="M466 1049.600l10.600 5.800v10.800l-10.600 5.600-10.600-5.600v-10.800z" fill="url(#hx)"/><path d="M466 1052.500l7.500 13.500-14-2.300z" fill="#26282d"/><path d="M466 1052.500l-6.500 11.200 1.800 0.300 5.500-9.500z" fill="#d5d9df" fill-opacity=".75"/><path d="M459.500 1063.700l14 2.300-5.500 3.500-8.500-4z" fill="#8a8f97"/><path d="M459.500 1063.700l10 0.500-8-2z" fill="#cfd3d9"/></svg>
<!-- thunderbird -->
<svg class="abs" style="left:502px;top:7px" width="26" height="26" viewBox="502 1047 26 26"><defs><linearGradient id="tb" x1="0" y1="0" x2="1" y2="1"><stop offset="0" stop-color="#3a8ff0"/><stop offset="1" stop-color="#0d5ad0"/></linearGradient></defs><path d="M503.300 1058c0.300-2.500 1.200-5 3-6.800-0.300 1.300-0.200 2.300 0.300 3.300 1.500-3.500 5-6 9.500-6 3.500 0 6 1 8.500 3.200-1-0.200-1.800-0.100-2.500 0.200 3 2 5 5.500 5 9.300 0 6-5 10.800-11.300 10.800s-12.500-5-12.500-14z" fill="url(#tb)"/><path d="M505 1056c2-4 6-6.500 10.500-6.500 2.500 0 4.500 0.700 6 1.800-3-0.300-5.500 0.500-7.500 2.200-3.500 0-7 1-9 2.500z" fill="#1a4fb8" fill-opacity=".6"/><ellipse cx="514.800" cy="1060.200" rx="6" ry="4.900" fill="#eaf4ff"/><path d="M509.300 1058.300l5.500 4.200 5.500-4.200" stroke="#a9cdf5" stroke-width="1" fill="none"/><path d="M509 1062c1.500 3 5 4 8 3-2 2.500-7 2-8-3z" fill="#cfe4fb"/></svg>
<!-- ccleaner -->
<svg class="abs" style="left:551px;top:6px" width="28" height="28" viewBox="551 1046 28 28"><path d="M575.800 1053.500c-2.200-3.200-6-5.200-10-5-6 0.300-10.500 5.200-10.500 11 0 6 4.800 11 11 11 3.500 0 7-1.500 9.500-4.500l-4.500-4c-1.300 1.500-3 2.400-5 2.400-3 0-5.300-2.300-5.300-5.200 0-3 2.300-5.200 5.300-5.200 1.800 0 3.500 0.900 4.500 2.300z" fill="#d93a2b"/><path d="M575.800 1053.500c-2.200-3.200-6-5.200-10-5-3 0.200-5.500 1.500-7.300 3.500 4-2.500 10-2 13.300 2.500z" fill="#ef6a55" fill-opacity=".7"/><path d="M567 1049.300l1.800 0.700-3.800 10.500-2-0.800z" fill="#2a7fd6"/><path d="M560.300 1058.200l6.200 2.700-1.800 5.200c-3.500 1.500-9 1.200-12.500-1.500 3.500-1.200 6.500-3.500 8.100-6.400z" fill="#f0d3a3"/><path d="M560.300 1058.200l6.200 2.700-0.600 1.800-6.600-2.800z" fill="#3a8fe0"/></svg>
<!-- firefox tile -->
<div class="abs" style="left:590px;top:1px;width:46px;height:38px;background:#444;border:1px solid #787878"></div>
<svg class="abs" style="left:598.500px;top:5px" width="29" height="29" viewBox="11 41 18 18"><path d="M21.900 42C22.800 43.600 24.200 44.400 25.600 45.600C27.400 47.200 28 49 27.900 50.600C27.700 54.600 24.400 57.700 20.100 57.700C15.800 57.700 12.300 54.600 12.300 50.500C12.300 48.400 13.100 46.400 14.400 44.900C14.500 45.600 14.800 46.200 15.200 46.600C15.700 45.800 16.400 45.300 17.100 45.200C17.600 46 18.600 46.400 19.700 46.200C19.900 44.600 20.900 43.200 21.900 42Z" fill="url(#ffg)"/><circle cx="20.200" cy="50" r="3.100" fill="url(#ffp)"/><path d="M16 48.200C17.300 47 19 46.900 20.600 47.500C19.500 47.900 18.900 48.500 19 49.200C19.600 49.200 20.300 49.300 20.700 49.600C19.600 50.400 18.100 50.700 17.200 50.300C16.300 49.900 15.800 49.100 16 48.200Z" fill="#ff9a1f"/></svg>
<!-- infinity -->
<div class="abs" style="left:650px;top:8px;width:24px;height:24px;background:#2a2a2a"></div>
<svg class="abs" style="left:650px;top:13px" width="24" height="14" viewBox="0 0 24 16" preserveAspectRatio="none"><defs><linearGradient id="infg" x1="0" y1="1" x2="1" y2="0"><stop offset="0" stop-color="#ff8f0c"/><stop offset="1" stop-color="#ffd020"/></linearGradient></defs><path d="M12 8C10 4.500 8 3 5.800 3 3.200 3 1.500 5.200 1.500 8s1.700 5 4.300 5c2.200 0 4.200-1.500 6.200-5 2-3.500 4-5 6.200-5 2.600 0 4.300 2.200 4.300 5s-1.700 5-4.300 5C16 13 14 11.500 12 8z" stroke="url(#infg)" stroke-width="3.300" fill="none"/></svg>
<!-- cmd tile -->
<div class="abs" style="left:688px;top:1px;width:46px;height:38px;background:#7a7a78;border:1.500px solid #f2f2f2"></div>
<svg class="abs" style="left:699.700px;top:11px" width="21.300" height="16.800" viewBox="0 0 22 17" preserveAspectRatio="none"><rect x="0" y="0" width="22" height="17" fill="#000"/><rect x="0" y="0" width="22" height="1.300" fill="#c9d3e6"/><path d="M22 1.300v5C14 6.500 5 8 0 11.500V1.300z" fill="#fff" fill-opacity=".13"/><path d="M3 4.500h2M3 4.500v3.200M3 7.700h2M6.800 5.200h.8M6.800 7.200h.8M8.800 4l1.700 4M12 8h6" stroke="#fff" stroke-width="1" fill="none"/></svg>
<!-- tray -->
<svg class="abs" style="left:1700px;top:15px" width="13" height="9" viewBox="0 0 13 9"><path d="M1 7.500l5.500-5.500 5.500 5.500" stroke="#fff" stroke-width="1.200" fill="none"/></svg>
<svg class="abs" style="left:1722.500px;top:12px" width="17" height="17" viewBox="0 0 17 17"><circle cx="8.500" cy="8.500" r="8.200" fill="#f26a0c"/><path d="M8 2.500l1.500 7.500M5 4.500l4.500 6M11.500 4l-2 6.500M3 9.500c3-1.200 6-.8 9.500 1.200M2.500 12c3-1.200 6.500-.8 10 1" stroke="#fff" stroke-width="1.300" fill="none" stroke-linecap="round"/></svg>
<svg class="abs" style="left:1747px;top:13.500px" width="17" height="15" viewBox="0 0 17 15"><path d="M4.500 1h11.500v8.500H4.500M2.500 11.500V14M2.500 14h8M7 14v-2.500" stroke="#fff" stroke-width="1.100" fill="none"/><rect x=".6" y=".6" width="3.800" height="4.800" stroke="#fff" stroke-width="1.100" fill="#1c1c1c"/><path d="M2.500 5.500v6" stroke="#fff" stroke-width="1.100"/></svg>
<svg class="abs" style="left:1770px;top:13px" width="18" height="15" viewBox="0 0 18 15"><path d="M1 5h2.500l3.500-3.500v12L3.500 10H1z" stroke="#fff" stroke-width="1.100" fill="none" stroke-linejoin="round"/><path d="M9.500 5c1 1.500 1 3.500 0 5M12 3.300c1.800 2.500 1.800 6 0 8.400M14.500 1.500c2.600 3.500 2.600 8.500 0 12" stroke="#fff" stroke-width="1.100" fill="none"/></svg>
<div class="abs" style="left:1812.700px;top:1.300px;color:#fff"><span style="display:inline-block;font-size:12.5px;letter-spacing:-0.290px;white-space:pre;transform-origin:0 50%;transform:scaleX(0.88);">18:25</span></div>
<div class="abs" style="left:1796.900px;top:19px;color:#fff"><span style="display:inline-block;font-size:12.5px;letter-spacing:0.133px;white-space:pre;transform-origin:0 50%;transform:scaleX(0.9);">03/09/2023</span></div>
<svg class="abs" style="left:1872.500px;top:11.500px" width="16.500" height="17" viewBox="0 0 18 18"><path d="M1 1h16v12h-5.500L9 15.500 6.500 13H1z" stroke="#fff" stroke-width="1.200" fill="none" stroke-linejoin="miter"/></svg>
</div>

</div></body></html>
